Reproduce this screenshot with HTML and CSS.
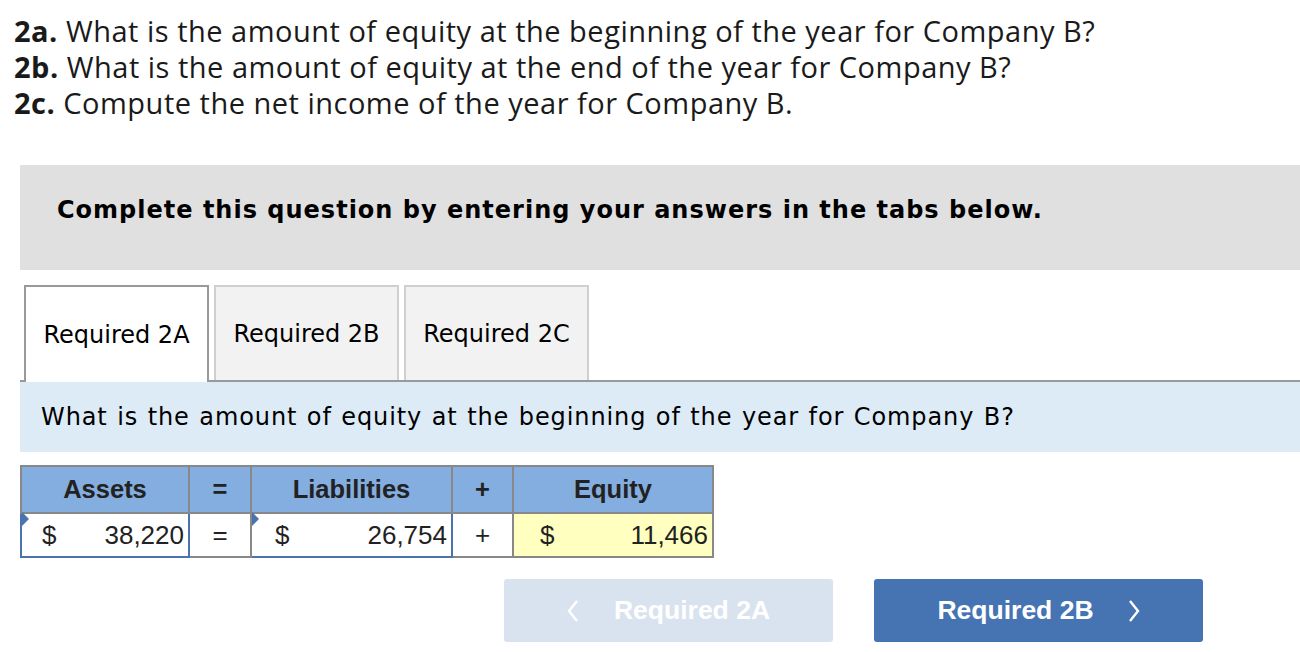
FILE: index.html
```html
<!DOCTYPE html>
<html>
<head>
<meta charset="utf-8">
<link rel="stylesheet" href="styles.css">
</head>
<body>
<div class="questions">
  <p class="q"><b>2a.</b> What is the amount of equity at the beginning of the year for Company B?</p>
  <p class="q"><b>2b.</b> What is the amount of equity at the end of the year for Company B?</p>
  <p class="q"><b>2c.</b> Compute the net income of the year for Company B.</p>
</div>
<div class="instructions">Complete this question by entering your answers in the tabs below.</div>
<div class="tabs">
  <div class="tab active">Required 2A</div>
  <div class="tab">Required 2B</div>
  <div class="tab">Required 2C</div>
</div>
<div class="prompt">What is the amount of equity at the beginning of the year for Company B?</div>
<table class="eq">
  <tr class="head">
    <th class="c1">Assets</th>
    <th class="c2">=</th>
    <th class="c3">Liabilities</th>
    <th class="c4">+</th>
    <th class="c5">Equity</th>
  </tr>
  <tr class="data">
    <td class="input"><span class="flag"></span><span class="cur">$</span><span class="num">38,220</span></td>
    <td class="op">=</td>
    <td class="input second"><span class="flag"></span><span class="cur">$</span><span class="num">26,754</span></td>
    <td class="op">+</td>
    <td class="result"><span class="cur">$</span><span class="num">11,466</span></td>
  </tr>
</table>
<div class="nav">
  <div class="btn prev"><svg class="chev left" width="12" height="24" viewBox="0 0 12 24"><polyline points="10,2 2,12 10,22" fill="none" stroke="#fff" stroke-width="2.4"/></svg>Required 2A</div>
  <div class="btn next">Required 2B<svg class="chev right" width="12" height="24" viewBox="0 0 12 24"><polyline points="2,2 10,12 2,22" fill="none" stroke="#fff" stroke-width="2.4"/></svg></div>
</div>
</body>
</html>
```
FILE: styles.css
```css
body {
  margin: 0;
  background: #fff;
  color: #1a1a1a;
}
.questions {
  padding: 13px 0 0 14px;
  font-family: "Open Sans", "Lato", sans-serif;
  font-size: 29px;
  letter-spacing: 0.5px;
}
.q {
  margin: 0;
  line-height: 36px;
}
.q b { font-weight: 700; }
.instructions {
  margin: 44px 0 0 20px;
  height: 105px;
  box-sizing: border-box;
  background: #e0e0e0;
  display: flex;
  align-items: center;
  padding: 0 0 16px 37px;
  font-family: "DejaVu Sans", Verdana, sans-serif;
  font-weight: bold;
  font-size: 24px;
  letter-spacing: 1px;
  color: #000;
}
.tabs {
  margin: 15px 0 0 20px;
  padding-left: 4px;
  display: flex;
  gap: 5px;
  border-bottom: 2px solid #999;
  height: 95px;
}
.tab {
  width: 185px;
  height: 95px;
  box-sizing: border-box;
  border: 2px solid #cfcfcf;
  border-bottom: none;
  background: #f2f2f2;
  display: flex;
  align-items: center;
  justify-content: center;
  font-family: "DejaVu Sans", Verdana, sans-serif;
  font-size: 24px;
  color: #000;
}
.tab.active {
  background: #fff;
  border-color: #999;
  height: 97px;
  position: relative;
  z-index: 1;
}
.prompt {
  margin-left: 20px;
  height: 70px;
  background: #ddebf7;
  display: flex;
  align-items: center;
  padding-left: 21px;
  font-family: "DejaVu Sans", Verdana, sans-serif;
  font-size: 24px;
  letter-spacing: 0.9px;
  word-spacing: 1px;
  color: #000;
}
.eq {
  margin: 13px 0 0 20px;
  border-collapse: collapse;
  border: 2px solid #888;
  font-family: "Liberation Sans", Arial, sans-serif;
  color: #222;
}
.eq th {
  background: #84ade0;
  height: 45px;
  font-size: 25.5px;
  font-weight: bold;
  border: 2px solid #888;
  padding: 0;
}
.c1 { width: 166px; }
.c2 { width: 60px; }
.c3 { width: 199px; }
.c4 { width: 59px; }
.c5 { width: 198px; }
.eq td {
  height: 42px;
  padding: 0;
  font-size: 26px;
  border: 2px solid #888;
  background: #fff;
  position: relative;
}
.eq td.op { text-align: center; }
.eq td.input { border: 2px solid #4a73b0; }
.eq td.result { background: #ffffbf; }
.eq td .cur { float: left; padding-left: 20px; }
.eq td .num { float: right; padding-right: 4px; }
.eq td.result .cur { padding-left: 26px; }
.eq td.second .cur { padding-left: 23px; }
.flag {
  position: absolute;
  left: 0;
  top: 0;
  width: 0;
  height: 0;
  border-top: 7px solid transparent;
  border-bottom: 7px solid transparent;
  border-left: 7px solid #4a73b0;
  margin-top: -2px;
}
.nav {
  margin: 21px 0 0 504px;
  display: flex;
  gap: 41px;
}
.btn {
  width: 329px;
  height: 63px;
  border-radius: 3px;
  display: flex;
  align-items: center;
  justify-content: center;
  font-family: "Liberation Sans", Arial, sans-serif;
  font-weight: bold;
  font-size: 26.5px;
  color: #fff;
}
.btn.prev { background: #d9e3ef; }
.btn.next { background: #4674b3; }
.chev { display: block; }
.chev.left { margin-right: 35px; }
.chev.right { margin-left: 34px; }
```
